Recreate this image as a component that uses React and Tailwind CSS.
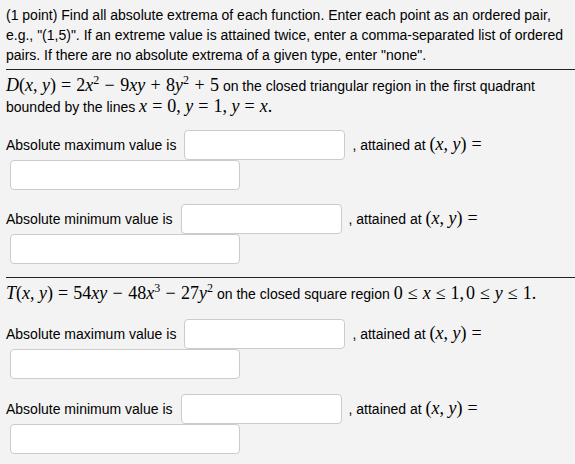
import React from 'react'

// math bits, rendered roughly like MathJax
const V = ({ children }) => <span className="italic">{children}</span>
const Rel = ({ children }) => <span className="mx-[0.28em]">{children}</span>
const Bin = ({ children }) => <span className="mx-[0.3em]">{children}</span>
const Sup = ({ children }) => <sup className="text-[12px] top-[-0.6em]">{children}</sup>
const M = ({ children }) => (
  <span className="font-['Liberation_Serif',serif] text-[18px] leading-none whitespace-nowrap">{children}</span>
)

const XY = () => (
  <>
    (<V>x</V>,<span className="ml-[0.25em]" /><V>y</V>)
  </>
)

function Field({ className }) {
  return (
    <input
      type="text"
      className={`h-[30px] bg-white border border-[#cbcbcb] rounded-[4px] outline-none ${className}`}
    />
  )
}

function AnswerRow({ label, top }) {
  return (
    <div className={top}>
      <div className="flex items-center h-[30px] pl-[6px]">
        <span>{label}</span>
        <Field className="ml-[8px] w-[161px]" />
        <span className="ml-[7px]">
          , attained at{' '}
          <M>
            <XY />
            <Rel>=</Rel>
          </M>
        </span>
      </div>
      <div className="pl-[10px]">
        <Field className="block w-[230px]" />
      </div>
    </div>
  )
}

export default function App() {
  return (
    <div className="w-[575px] h-[464px] overflow-hidden bg-[#f3f3f3] text-black text-[14px] leading-[20px] font-['Liberation_Sans',Arial,sans-serif]">
      {/* instructions */}
      <div className="pt-[5px] pl-[6px] whitespace-nowrap">
        <div>(1 point) Find all absolute extrema of each function. Enter each point as an ordered pair,</div>
        <div>e.g., "(1,5)". If an extreme value is attained twice, enter a comma-separated list of ordered</div>
        <div>pairs. If there are no absolute extrema of a given type, enter "none".</div>
      </div>

      <div className="mt-[4px] ml-[6px] border-t border-[#222]" />

      {/* problem D */}
      <div className="mt-[6px] pl-[6px] whitespace-nowrap">
        <div className="h-[20px]">
          <M>
            <V>D</V>
            <XY />
            <Rel>=</Rel>2<V>x</V>
            <Sup>2</Sup>
            <Bin>−</Bin>9<V>xy</V>
            <Bin>+</Bin>8<V>y</V>
            <Sup>2</Sup>
            <Bin>+</Bin>5
          </M>{' '}
          on the closed triangular region in the first quadrant
        </div>
        <div className="h-[20px] mt-[1px]">
          bounded by the lines{' '}
          <M>
            <V>x</V>
            <Rel>=</Rel>0,<span className="ml-[0.25em]" />
            <V>y</V>
            <Rel>=</Rel>1,<span className="ml-[0.25em]" />
            <V>y</V>
            <Rel>=</Rel>
            <V>x</V>.
          </M>
        </div>
      </div>

      <AnswerRow label="Absolute maximum value is" top="mt-[13px]" />
      <AnswerRow label="Absolute minimum value is" top="mt-[14px]" />

      <div className="mt-[13px] ml-[6px] border-t border-[#222]" />

      {/* problem T */}
      <div className="mt-[6px] pl-[6px] whitespace-nowrap h-[20px]">
        <M>
          <V>T</V>
          <XY />
          <Rel>=</Rel>54<V>xy</V>
          <Bin>−</Bin>48<V>x</V>
          <Sup>3</Sup>
          <Bin>−</Bin>27<V>y</V>
          <Sup>2</Sup>
        </M>{' '}
        on the closed square region{' '}
        <M>
          0<Rel>≤</Rel>
          <V>x</V>
          <Rel>≤</Rel>1,<span className="ml-[0.1em]" />0<Rel>≤</Rel>
          <V>y</V>
          <Rel>≤</Rel>1.
        </M>
      </div>

      <AnswerRow label="Absolute maximum value is" top="mt-[15px]" />
      <AnswerRow label="Absolute minimum value is" top="mt-[15px]" />
    </div>
  )
}
